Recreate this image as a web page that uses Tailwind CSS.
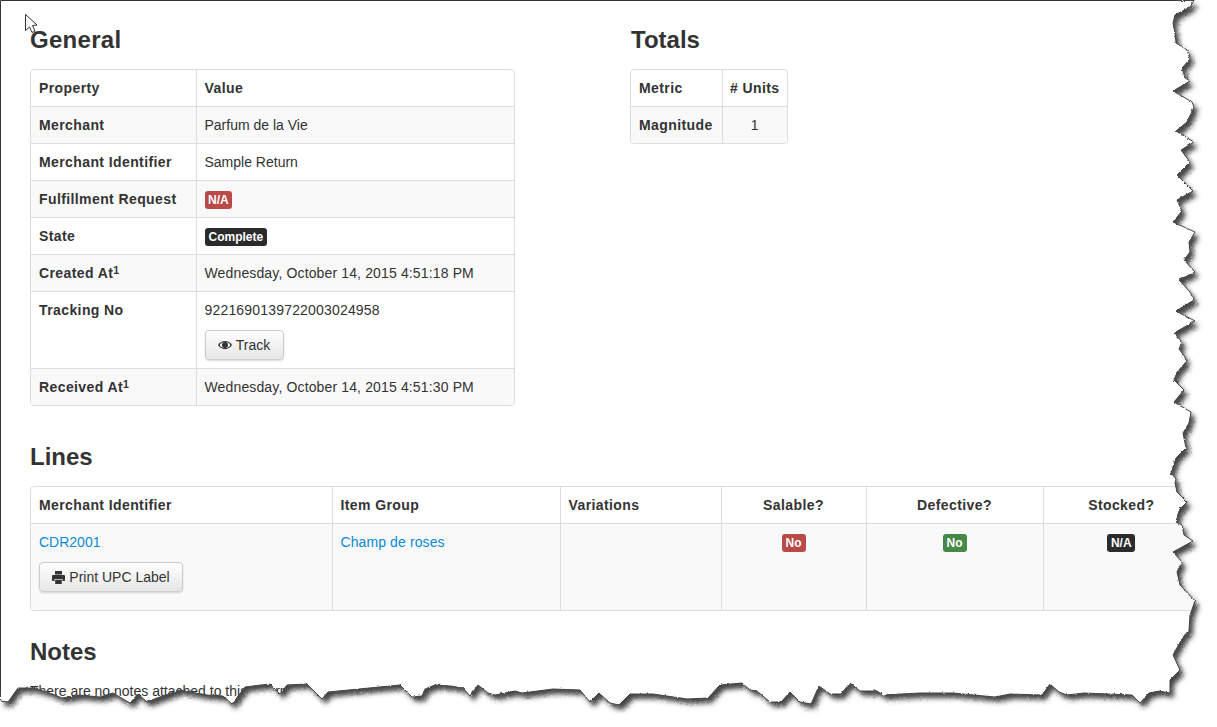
<!DOCTYPE html>
<html lang="en">
<head>
<meta charset="utf-8">
<title>Return</title>
<script src="https://cdn.jsdelivr.net/npm/@tailwindcss/browser@4"></script>
</head>
<body class="bg-white">
<div class="relative w-[1217px] h-[727px] overflow-hidden bg-white text-[#333] text-[14px] leading-[20px] font-['Liberation_Sans',Arial,sans-serif]">
  <main class="pt-[27px] pl-[30px] w-[1217px]">
    <div class="flex">
      <section class="w-[600px]">
        <h3 class="text-[24px] leading-[26px] font-bold mb-[16px] tracking-[0.3px]">General</h3>
        <div class="w-[485px] border border-[#ddd] rounded-[4px] overflow-hidden">
          <table class="w-full table-fixed border-collapse">
            <colgroup><col class="w-[165px]"><col></colgroup>
            <tr>
              <th class="p-2 text-left font-bold tracking-[0.4px]">Property</th>
              <th class="p-2 text-left font-bold tracking-[0.4px] border-l border-[#ddd]">Value</th>
            </tr>
            <tr class="bg-[#f9f9f9] border-t border-[#ddd]">
              <th class="p-2 text-left font-bold tracking-[0.4px]">Merchant</th>
              <td class="p-2 border-l border-[#ddd]">Parfum de la Vie</td>
            </tr>
            <tr class="border-t border-[#ddd]">
              <th class="p-2 text-left font-bold tracking-[0.4px]">Merchant Identifier</th>
              <td class="p-2 border-l border-[#ddd]">Sample Return</td>
            </tr>
            <tr class="bg-[#f9f9f9] border-t border-[#ddd]">
              <th class="p-2 text-left font-bold tracking-[0.4px]">Fulfillment Request</th>
              <td class="p-2 border-l border-[#ddd]"><span class="block w-fit mt-[2px] h-[18px] px-[3.5px] rounded-[3px] bg-[#b94a48] text-white text-[12px] leading-[18px] font-bold">N/A</span></td>
            </tr>
            <tr class="border-t border-[#ddd]">
              <th class="p-2 text-left font-bold tracking-[0.4px]">State</th>
              <td class="p-2 border-l border-[#ddd]"><span class="block w-fit mt-[2px] h-[18px] px-[4px] rounded-[3px] bg-[#2b2b2b] text-white text-[12px] leading-[18px] font-bold">Complete</span></td>
            </tr>
            <tr class="bg-[#f9f9f9] border-t border-[#ddd]">
              <th class="p-2 text-left font-bold tracking-[0.4px]">Created At<sup class="text-[10.5px] align-[-1px]">1</sup></th>
              <td class="p-2 border-l border-[#ddd] tracking-[0.14px]">Wednesday, October 14, 2015 4:51:18 PM</td>
            </tr>
            <tr class="border-t border-[#ddd]">
              <th class="p-2 text-left align-top font-bold tracking-[0.4px]">Tracking No</th>
              <td class="p-2 border-l border-[#ddd]">
                <div class="mb-[10px] tracking-[0.18px]">9221690139722003024958</div>
                <button class="flex items-center gap-[4px] h-[30px] w-[79px] justify-center border border-[#ccc] rounded-[4px] bg-linear-to-b from-white to-[#e6e6e6] shadow-[0_1px_2px_rgba(0,0,0,0.15)] text-[#333]">
                  <svg width="14" height="10" viewBox="0 0 14 10"><path d="M0 5C3 -0.5 11 -0.5 14 5C11 10.5 3 10.5 0 5Z" fill="#333"/><ellipse cx="7" cy="5" rx="5.2" ry="3" fill="#f3f3f3"/><circle cx="7" cy="5" r="3" fill="#333"/></svg>
                  <span>Track</span>
                </button>
              </td>
            </tr>
            <tr class="bg-[#f9f9f9] border-t border-[#ddd]">
              <th class="p-2 text-left font-bold tracking-[0.4px]">Received At<sup class="text-[10.5px] align-[-1px]">1</sup></th>
              <td class="p-2 border-l border-[#ddd] tracking-[0.14px]">Wednesday, October 14, 2015 4:51:30 PM</td>
            </tr>
          </table>
        </div>
      </section>
      <section>
        <h3 class="text-[24px] leading-[26px] font-bold mb-[16px] pl-[1px]">Totals</h3>
        <div class="w-[158px] border border-[#ddd] rounded-[4px] overflow-hidden">
          <table class="w-full table-fixed border-collapse">
            <colgroup><col class="w-[91px]"><col></colgroup>
            <tr>
              <th class="p-2 text-left font-bold tracking-[0.4px]">Metric</th>
              <th class="py-2 text-center font-bold tracking-[0.4px] border-l border-[#ddd]"># Units</th>
            </tr>
            <tr class="bg-[#f9f9f9] border-t border-[#ddd]">
              <th class="p-2 text-left font-bold tracking-[0.4px]">Magnitude</th>
              <td class="py-2 text-center border-l border-[#ddd]">1</td>
            </tr>
          </table>
        </div>
      </section>
    </div>

    <h3 class="text-[24px] leading-[26px] font-bold mt-[38px] mb-[16px]">Lines</h3>
    <div class="w-[1170px] border border-[#ddd] rounded-[4px] overflow-hidden">
      <table class="w-full table-fixed border-collapse">
        <colgroup><col class="w-[301px]"><col class="w-[228px]"><col class="w-[161px]"><col class="w-[145px]"><col class="w-[177px]"><col></colgroup>
        <tr>
          <th class="p-2 text-left font-bold tracking-[0.4px]">Merchant Identifier</th>
          <th class="p-2 text-left font-bold tracking-[0.4px] border-l border-[#ddd]">Item Group</th>
          <th class="p-2 text-left font-bold tracking-[0.4px] border-l border-[#ddd]">Variations</th>
          <th class="p-2 text-center font-bold tracking-[0.4px] border-l border-[#ddd]">Salable?</th>
          <th class="p-2 text-center font-bold tracking-[0.4px] border-l border-[#ddd]">Defective?</th>
          <th class="p-2 text-center font-bold tracking-[0.4px] border-l border-[#ddd]">Stocked?</th>
        </tr>
        <tr class="bg-[#f9f9f9] border-t border-[#ddd]">
          <td class="pt-2 pb-[18px] px-2 align-top">
            <a class="block mb-[10px] text-[#0a8ad6]">CDR2001</a>
            <button class="flex items-center gap-[4px] h-[30px] w-[144px] justify-center border border-[#ccc] rounded-[4px] bg-linear-to-b from-white to-[#e6e6e6] shadow-[0_1px_2px_rgba(0,0,0,0.15)] text-[#333]">
              <svg width="13" height="13" viewBox="0 0 13 13" fill="#333"><rect x="3" y="0" width="7" height="3.5"/><rect x="0" y="4" width="13" height="6" rx="1"/><rect x="2.5" y="8" width="8" height="5" fill="#f0f0f0"/><rect x="3.2" y="8.7" width="6.6" height="4.3"/></svg>
              <span>Print UPC Label</span>
            </button>
          </td>
          <td class="p-2 align-top border-l border-[#ddd] tracking-[0.1px]"><a class="text-[#0a8ad6]">Champ de roses</a></td>
          <td class="p-2 align-top border-l border-[#ddd]"></td>
          <td class="p-2 align-top border-l border-[#ddd]"><span class="block w-fit mx-auto mt-[2px] h-[18px] px-[4px] rounded-[3px] bg-[#b94a48] text-white text-[12px] leading-[18px] font-bold">No</span></td>
          <td class="p-2 align-top border-l border-[#ddd]"><span class="block w-fit mx-auto mt-[2px] h-[18px] px-[4px] rounded-[3px] bg-[#468847] text-white text-[12px] leading-[18px] font-bold">No</span></td>
          <td class="p-2 align-top border-l border-[#ddd]"><span class="block w-fit mx-auto mt-[2px] h-[18px] px-[3.5px] rounded-[3px] bg-[#2b2b2b] text-white text-[12px] leading-[18px] font-bold">N/A</span></td>
        </tr>
      </table>
    </div>

    <h3 class="text-[24px] leading-[26px] font-bold mt-[28px] mb-[16px]">Notes</h3>
    <p>There are no notes attached to this return.</p>
  </main>

  <!-- torn-paper edge laid over the page -->
  <svg class="absolute inset-0 pointer-events-none" width="1217" height="727" viewBox="0 0 1217 727">
    <defs>
      <path id="edge" d="M0.5 0.5L1194 0.5L1190 7L1175 15L1173 23L1175 33L1176 43L1187 50L1190 59L1182 68L1185 78L1190 81L1173 91L1192 102L1194 107L1187 122L1176 131L1194 142L1181 150L1190 162L1177 175L1193 191L1177 200L1182 211L1173 222L1195 232L1189 242L1190 252L1184 260L1195 272L1179 280L1190 292L1194 300L1176 311L1195 321L1174 333L1182 342L1179 349L1185 357L1186 362L1177 372L1174 380L1184 390L1174 402L1191 412L1189 423L1183 433L1186 448L1176 458L1171 473L1176 479L1175 483L1177 492L1187 502L1179 510L1176 522L1182 525L1184 535L1193 541L1173 552L1182 562L1177 572L1180 585L1195 601L1190 615L1189 630L1183 637L1173 655L1180 670L1170 680L1170 693L1159 691L1149 693L1140 703L1132 695L1084 693L1067 695L1059 692L1050 684L1042 695L1010 694L995 697L953 693L920 693L883 695L877 691L860 691L850 683L841 694L830 694L819 686L811 704L800 702L790 692L781 702L770 702L757 691L750 690L742 683L720 685L708 698L687 699L653 694L630 694L619 705L610 703L599 693L590 702L580 690L553 689L522 693L515 691L495 695L488 693L478 685L470 696L463 688L450 686L435 685L425 689L422 696L412 697L400 685L328 692L322 699L307 684L287 685L280 694L270 684L245 687L232 704L223 696L207 695L180 690L157 698L147 702L138 694L130 703L113 693L100 697L80 695L62 698L50 693L33 688L18 688L8 702L0.5 701Z"/>
      <filter id="blur" x="-5%" y="-5%" width="110%" height="110%"><feGaussianBlur stdDeviation="2.6"/></filter>
      <filter id="rough" filterUnits="userSpaceOnUse" x="0" y="0" width="1217" height="727" color-interpolation-filters="sRGB">
        <feTurbulence type="fractalNoise" baseFrequency="0.3" numOctaves="2" seed="4"/>
        <feDisplacementMap in="SourceGraphic" scale="2.5" xChannelSelector="R" yChannelSelector="G"/>
      </filter>
      <mask id="outside" maskUnits="userSpaceOnUse" x="0" y="0" width="1217" height="727">
        <rect width="1217" height="727" fill="#fff"/>
        <use href="#edge" fill="#000"/>
      </mask>
    </defs>
    <g filter="url(#rough)">
      <rect width="1217" height="727" fill="#fff" mask="url(#outside)"/>
      <g mask="url(#outside)">
        <use href="#edge" transform="translate(4 5)" fill="#444" filter="url(#blur)"/>
      </g>
      <use href="#edge" fill="none" stroke="#444" stroke-width="1"/>
    </g>
    <rect x="0" y="0" width="1165" height="4" fill="#fff"/>
    <rect x="0" y="0" width="4" height="680" fill="#fff"/>
    <path d="M0.5 690L0.5 0.5L1175 0.5" fill="none" stroke="#333" stroke-width="1"/>
    <!-- mouse pointer -->
    <path d="M25.5 14.5L25.5 30.5L29.5 27L32 32.5L35 31L32.5 25.5L37 25Z" fill="#fff" stroke="#333" stroke-width="1"/>
  </svg>
</div>
</body>
</html>
